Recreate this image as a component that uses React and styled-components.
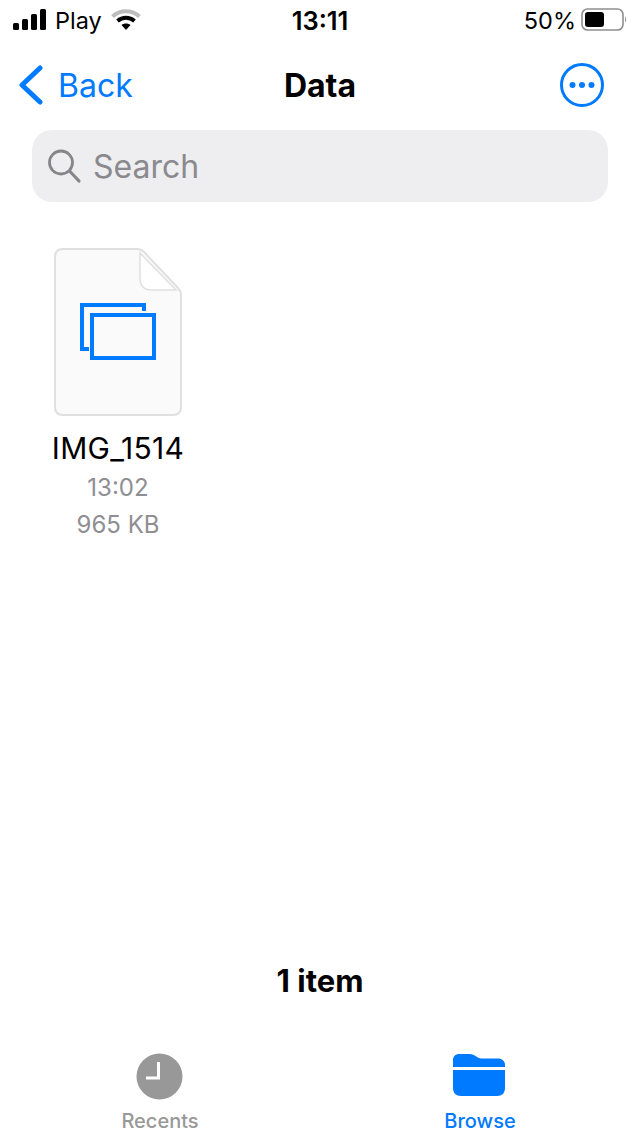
import React from 'react'
import styled, { createGlobalStyle } from 'styled-components'

const Global = createGlobalStyle`
    html, body {
        margin: 0;
        padding: 0;
        background: #fff;
    }
    * {
        box-sizing: border-box;
    }
`

const Page = styled.div`
    width: 640px;
    height: 1136px;
    display: flex;
    flex-direction: column;
    overflow: hidden;
    background: #fff;
    color: #000;
    font-family: Inter, "Liberation Sans", sans-serif;
`

const StatusBar = styled.div`
    height: 40px;
    display: grid;
    grid-template-columns: 1fr auto 1fr;
    align-items: center;
    padding: 0 13px;
    font-size: 24px;
`

const StatusLeft = styled.div`
    display: flex;
    align-items: center;
    gap: 7px;
`

const Carrier = styled.span`
    font-size: 23.5px;
    margin-right: 2px;
`

const Clock = styled.span`
    font-weight: 600;
    font-size: 25.5px;
`

const StatusRight = styled.div`
    display: flex;
    align-items: center;
    justify-content: flex-end;
    gap: 5px;
    font-size: 23.5px;
`

const NavBar = styled.div`
    height: 90px;
    display: grid;
    grid-template-columns: 1fr auto 1fr;
    align-items: center;
    padding: 0 18px;
`

const BackLink = styled.a`
    display: flex;
    align-items: center;
    gap: 14px;
    color: #007aff;
    font-size: 32px;
`

const NavTitle = styled.div`
    font-size: 32px;
    font-weight: 700;
`

const NavAction = styled.div`
    display: flex;
    justify-content: flex-end;
    padding-right: 18px;
`

const SearchBox = styled.div`
    height: 72px;
    margin: 0 32px;
    padding: 0 14px;
    display: flex;
    align-items: center;
    gap: 11px;
    border-radius: 20px;
    background: #eeeef0;
    color: #8a8a8e;
    font-size: 32px;
`

const Files = styled.div`
    flex: 1;
    padding: 46px 0 0 36px;
    display: flex;
    align-items: flex-start;
`

const FileItem = styled.div`
    width: 164px;
    display: flex;
    flex-direction: column;
    align-items: center;
`

const FileName = styled.div`
    margin-top: 12px;
    margin-bottom: 2px;
    font-size: 30px;
    line-height: 37px;
    letter-spacing: 0.3px;
    white-space: nowrap;
`

const FileMeta = styled.div`
    font-size: 24px;
    line-height: 37px;
    color: #8e8e93;
`

const ItemCount = styled.div`
    height: 60px;
    margin-bottom: 30px;
    display: flex;
    align-items: center;
    justify-content: center;
    font-size: 31px;
    font-weight: 700;
`

const TabBar = styled.div`
    height: 96px;
    display: grid;
    grid-template-columns: 1fr 1fr;
`

const Tab = styled.div`
    display: flex;
    flex-direction: column;
    align-items: center;
    justify-content: flex-end;
    padding-bottom: 3px;
    gap: 8px;
    color: ${({ $active }) => ($active ? '#007aff' : '#989898')};
    font-size: 20px;
    font-weight: 500;
`

const Signal = () => (
    <svg width="35" height="22" viewBox="0 0 35 22">
        <rect x="0" y="14" width="6" height="7" rx="1.5" fill="#000" />
        <rect x="9" y="10" width="6" height="11" rx="1.5" fill="#000" />
        <rect x="18" y="5" width="6" height="16" rx="1.5" fill="#000" />
        <rect x="27" y="0" width="6" height="21" rx="1.5" fill="#000" />
    </svg>
)

const Wifi = () => (
    <svg width="30" height="24" viewBox="0 0 30 24">
        <path d="M1.5 8.5 C9 1.500 21 1.500 28.5 8.5" fill="none" stroke="#bdbdbd" strokeWidth="4" />
        <path d="M6.5 13 C11.5 8.8 18.5 8.8 23.5 13" fill="none" stroke="#000" strokeWidth="4" />
        <path d="M10.5 17 C13 15 17 15 19.5 17 L15 22 Z" fill="#000" />
    </svg>
)

const Battery = () => (
    <svg width="46" height="24" viewBox="0 0 46 24">
        <rect x="1" y="1" width="41" height="21" rx="5.5" fill="none" stroke="#8e8e8e" strokeWidth="1.6" />
        <rect x="4" y="4" width="19" height="15" rx="3" fill="#000" />
        <path d="M44 8.5 C45.5 9.5 45.5 13.5 44 14.5 Z" fill="#9a9a9a" />
    </svg>
)

const Chevron = () => (
    <svg width="26" height="40" viewBox="0 0 26 40">
        <path d="M22 3 L4 20 L22 37" fill="none" stroke="#007aff" strokeWidth="5" strokeLinecap="round" strokeLinejoin="round" />
    </svg>
)

const MoreCircle = () => (
    <svg width="44" height="44" viewBox="0 0 44 44">
        <circle cx="22" cy="22" r="20.5" fill="none" stroke="#007aff" strokeWidth="3" />
        <circle cx="12.5" cy="22" r="3" fill="#007aff" />
        <circle cx="22" cy="22" r="3" fill="#007aff" />
        <circle cx="31.5" cy="22" r="3" fill="#007aff" />
    </svg>
)

const SearchIcon = () => (
    <svg width="36" height="36" viewBox="0 0 36 36">
        <circle cx="15" cy="14.5" r="11.5" fill="none" stroke="#85858a" strokeWidth="2.8" />
        <path d="M24 23.500 L33 33" stroke="#85858a" strokeWidth="3.2" strokeLinecap="round" />
    </svg>
)

const FileIcon = () => (
    <svg width="130" height="170" viewBox="0 0 130 170">
        <path d="M10 1 H84 C87 1 89 2 91 4 L125 40 C127 42 128 44 128 47 V159 C128 164 125 167 120 167 H10 C5 167 2 164 2 159 V9 C2 4 5 1 10 1 Z" fill="#fafafa" stroke="#e0e0e0" strokeWidth="2" />
        <path d="M87 5 L123 42 H99 C91 42 87 38 87 30 Z" fill="#fff" stroke="#e0e0e0" strokeWidth="1.5" />
        <path d="M91 63 V57 H29 V101 H36" fill="none" stroke="#007aff" strokeWidth="4" />
        <rect x="39" y="67" width="62" height="43" fill="none" stroke="#007aff" strokeWidth="4" />
    </svg>
)

const ClockIcon = () => (
    <svg width="48" height="48" viewBox="0 0 48 48">
        <circle cx="23.5" cy="23.5" r="23" fill="#989898" />
        <path d="M22.500 9 V25 H10" fill="none" stroke="#fff" strokeWidth="3" />
    </svg>
)

const FolderIcon = () => (
    <svg width="54" height="48" viewBox="1 0 54 48">
        <path d="M1 14 V7 C1 3 4 1 7 1 H16 C21 1 22 2 25 4 C27 5.500 28 5.500 31 5.500 H46 C50 5.500 53 8 53 12 V14 Z" fill="#007aff" />
        <path d="M1 17 H53 V35 C53 40 50 43 45 43 H9 C4 43 1 40 1 35 Z" fill="#007aff" />
    </svg>
)

const App = () => {
    return (
        <>
            <Global />
            <Page>
                <StatusBar>
                    <StatusLeft>
                        <Signal />
                        <Carrier>Play</Carrier>
                        <Wifi />
                    </StatusLeft>
                    <Clock>13:11</Clock>
                    <StatusRight>
                        <span>50%</span>
                        <Battery />
                    </StatusRight>
                </StatusBar>
                <NavBar>
                    <BackLink>
                        <Chevron />
                        <span>Back</span>
                    </BackLink>
                    <NavTitle>Data</NavTitle>
                    <NavAction>
                        <MoreCircle />
                    </NavAction>
                </NavBar>
                <SearchBox>
                    <SearchIcon />
                    <span>Search</span>
                </SearchBox>
                <Files>
                    <FileItem>
                        <FileIcon />
                        <FileName>IMG_1514</FileName>
                        <FileMeta>13:02</FileMeta>
                        <FileMeta>965 KB</FileMeta>
                    </FileItem>
                </Files>
                <ItemCount>1 item</ItemCount>
                <TabBar>
                    <Tab>
                        <ClockIcon />
                        <span>Recents</span>
                    </Tab>
                    <Tab $active>
                        <FolderIcon />
                        <span>Browse</span>
                    </Tab>
                </TabBar>
            </Page>
        </>
    )
}

export default App
